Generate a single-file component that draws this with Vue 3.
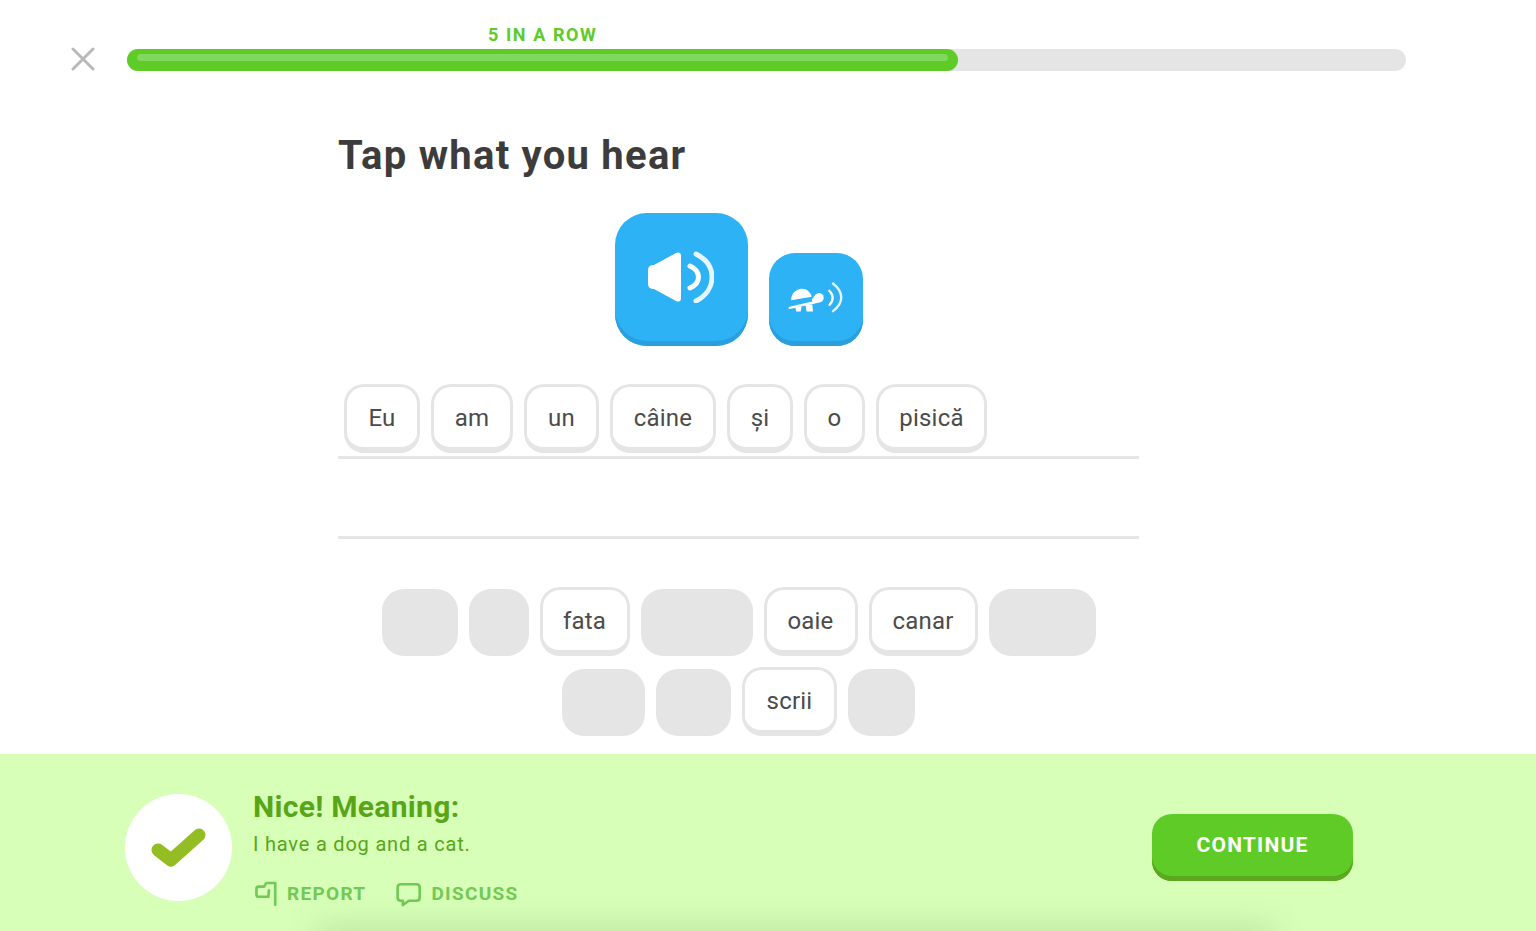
<script setup>
const progress = 65

const answer = [
  { text: 'Eu', width: 76 },
  { text: 'am', width: 82 },
  { text: 'un', width: 75 },
  { text: 'câine', width: 106 },
  { text: 'și', width: 66 },
  { text: 'o', width: 61 },
  { text: 'pisică', width: 111 }
]

const bankRows = [
  [
    { width: 76 },
    { width: 60 },
    { text: 'fata', width: 90 },
    { width: 112 },
    { text: 'oaie', width: 94 },
    { text: 'canar', width: 109 },
    { width: 107 }
  ],
  [
    { width: 83 },
    { width: 75 },
    { text: 'scrii', width: 95 },
    { width: 67 }
  ]
]
</script>

<template>
  <div class="page">
    <header class="top">
      <svg class="close" viewBox="0 0 24 24" width="24" height="24" aria-label="Close">
        <path d="M2 2 22 22M22 2 2 22" />
      </svg>
      <div class="bar">
        <div class="bar-fill" :style="{ width: progress + '%' }">
          <span class="streak">5 IN A ROW</span>
          <div class="bar-shine"></div>
        </div>
      </div>
    </header>

    <main class="lesson">
      <h1>Tap what you hear</h1>

      <div class="audio">
        <button class="audio-btn big" aria-label="Play">
          <svg viewBox="0 0 66 52" width="66" height="52">
            <path class="fill" d="M6 14 28 2Q33 0 33 5V47Q33 52 28 50L6 38Q0 38 0 33V19Q0 14 6 14Z" />
            <path class="wave" d="M42 15C48.500 18 50.500 22 50.500 26 50.500 30 48.500 34 42 37" />
            <path class="wave soft" d="M48 3C58 8 64 16 64 26 64 36 58 45 48 50" />
          </svg>
        </button>
        <button class="audio-btn small" aria-label="Play slowly">
          <svg viewBox="565 245 168 92" width="56" height="31">
            <path class="fill" d="M575 299C573 281 589 265 607 265 622 265 632 275 636 289Z" />
            <path class="line" d="M570 322 642 306" />
            <path class="fill" d="M586 318H606L603 333H590ZM617 312H638L640 333H621Z" />
            <path class="fill" d="M636 298 648 282A14 14 0 1 1 662 305L642 310Z" />
            <path class="wave" d="M689 271C702 282 702 300 690 313" />
            <path class="wave soft" d="M700 249C733 275 733 308 700 332" />
          </svg>
        </button>
      </div>

      <div class="answer-lines">
        <div class="answer-row">
          <span v-for="w in answer" :key="w.text" class="chip" :style="{ width: w.width + 'px' }">{{ w.text }}</span>
        </div>
        <div class="answer-row empty"></div>
      </div>

      <div class="bank">
        <div v-for="(row, i) in bankRows" :key="i" class="bank-row">
          <template v-for="(w, j) in row" :key="j">
            <span v-if="w.text" class="chip" :style="{ width: w.width + 'px' }">{{ w.text }}</span>
            <span v-else class="slot" :style="{ width: w.width + 'px' }"></span>
          </template>
        </div>
      </div>
    </main>

    <footer class="result">
      <div class="result-glow"></div>
      <div class="badge">
        <svg viewBox="0 0 56 42" width="56" height="42">
          <path d="M7 23 20 33 48 8" />
        </svg>
      </div>
      <div class="result-text">
        <h2>Nice! Meaning:</h2>
        <p>I have a dog and a cat.</p>
        <div class="links">
          <a class="link">
            <svg viewBox="430 305 75 85" width="25" height="28">
              <path d="M497 380V314H473Q469 314 467 318L464 325H447Q440 325 440 332V349Q440 356 447 356H476L478 336" />
            </svg>
            REPORT
          </a>
          <a class="link">
            <svg viewBox="860 305 82 80" width="27" height="27">
              <path d="M878 314H925Q935 314 935 324V354Q935 364 925 364H902L884 377V364H878Q868 364 868 354V324Q868 314 878 314Z" />
            </svg>
            DISCUSS
          </a>
        </div>
      </div>
      <button class="continue">CONTINUE</button>
    </footer>
  </div>
</template>

<style>
body {
  background: #fff;
}
</style>

<style scoped>
.page {
  height: 931px;
  display: flex;
  flex-direction: column;
  overflow: hidden;
  font-family: Roboto, "Liberation Sans", sans-serif;
  color: #4b4b4b;
}

.top {
  display: flex;
  align-items: flex-start;
  gap: 32px;
  padding: 47px 130px 0 71px;
  height: 24px;
  box-sizing: content-box;
}

.close {
  flex: none;
  fill: none;
  stroke: #b9b9b9;
  stroke-width: 3;
  stroke-linecap: round;
}

.bar {
  flex: 1;
  height: 22px;
  margin-top: 2px;
  background: #e5e5e5;
  border-radius: 11px;
}

.bar-fill {
  position: relative;
  height: 22px;
  background: #5ecb27;
  border-radius: 11px;
  padding: 5px 10px 0;
  box-sizing: border-box;
}

.bar-shine {
  height: 7px;
  background: #80d95c;
  border-radius: 4px;
}

.streak {
  position: absolute;
  left: 0;
  right: 0;
  bottom: 26px;
  text-align: center;
  font-size: 18px;
  line-height: 20px;
  font-weight: 700;
  letter-spacing: 1.6px;
  color: #5ecb27;
}

.lesson {
  flex: 1;
  width: 801px;
  margin-left: 338px;
}

h1 {
  margin: 60px 0 0;
  font-size: 40px;
  line-height: 50px;
  font-weight: 700;
  letter-spacing: 1.25px;
  color: #3c3c3c;
}

.audio {
  display: flex;
  justify-content: center;
  align-items: flex-end;
  gap: 21px;
  margin-top: 32px;
}

.audio-btn {
  display: flex;
  align-items: center;
  justify-content: center;
  border: none;
  padding: 0 0 5px;
  background: #2db2f5;
  box-shadow: inset 0 -5px 0 #2a9fdc;
}

.audio-btn.big {
  width: 133px;
  height: 133px;
  border-radius: 32px;
}

.audio-btn.small {
  width: 94px;
  height: 93px;
  border-radius: 26px;
}

.audio-btn .fill {
  fill: #fff;
}

.audio-btn .wave,
.audio-btn .line {
  fill: none;
  stroke: #fff;
  stroke-width: 5;
  stroke-linecap: round;
}

.small .wave,
.small .line {
  stroke-width: 7;
}

.audio-btn .soft {
  stroke: #e6f5fe;
}

.answer-lines {
  margin-top: 38px;
}

.answer-row {
  display: flex;
  gap: 11px;
  padding-left: 6px;
  border-bottom: 3px solid #e5e5e5;
  box-sizing: content-box;
  height: 72px;
}

.answer-row.empty {
  height: 77px;
}

.chip {
  display: flex;
  align-items: center;
  justify-content: center;
  box-sizing: border-box;
  height: 69px;
  padding-top: 2px;
  background: #fff;
  border: 3px solid #e5e5e5;
  border-bottom-width: 6px;
  border-radius: 20px;
  font-size: 24px;
  letter-spacing: 0.2px;
  color: #4b4b4b;
}

.bank {
  display: flex;
  flex-direction: column;
  gap: 11px;
  margin-top: 48px;
}

.bank-row {
  display: flex;
  justify-content: center;
  align-items: flex-end;
  gap: 11px;
}

.slot {
  height: 67px;
  background: #e5e5e5;
  border-radius: 22px;
}

.result {
  position: relative;
  display: flex;
  align-items: flex-start;
  flex: none;
  height: 177px;
  box-sizing: border-box;
  padding: 40px 183px 0 125px;
  background: #d7ffb8;
  overflow: hidden;
}

.result-glow {
  position: absolute;
  left: 320px;
  right: 265px;
  bottom: -24px;
  height: 24px;
  box-shadow: 0 0 32px 4px rgba(60, 90, 40, 0.17);
}

.badge {
  flex: none;
  display: flex;
  align-items: center;
  justify-content: center;
  width: 107px;
  height: 107px;
  border-radius: 50%;
  background: #fff;
}

.badge svg {
  fill: none;
  stroke: #93bd22;
  stroke-width: 13;
  stroke-linecap: round;
  stroke-linejoin: round;
}

.result-text {
  flex: 1;
  margin-left: 21px;
  color: #58a700;
}

h2 {
  margin: -5px 0 0;
  font-size: 30px;
  line-height: 36px;
  font-weight: 700;
  letter-spacing: 0.3px;
  color: #58a618;
}

.result-text p {
  margin: 6px 0 0;
  font-size: 20px;
  line-height: 26px;
  letter-spacing: 0.8px;
  color: #58a618;
}

.links {
  display: flex;
  gap: 29px;
  margin-top: 23px;
}

.link {
  display: flex;
  align-items: center;
  gap: 9px;
  font-size: 19px;
  line-height: 28px;
  font-weight: 700;
  letter-spacing: 1.3px;
  color: #72c955;
}

.link svg {
  fill: none;
  stroke: #72c955;
  stroke-width: 8;
  stroke-linejoin: round;
  stroke-linecap: round;
}

.continue {
  flex: none;
  width: 201px;
  height: 67px;
  margin-top: 20px;
  padding: 0 0 5px;
  border: none;
  border-radius: 20px;
  background: #5ecb27;
  box-shadow: inset 0 -5px 0 #5aa81f;
  font-family: inherit;
  font-size: 21px;
  font-weight: 700;
  letter-spacing: 1.2px;
  color: #fff;
}
</style>
